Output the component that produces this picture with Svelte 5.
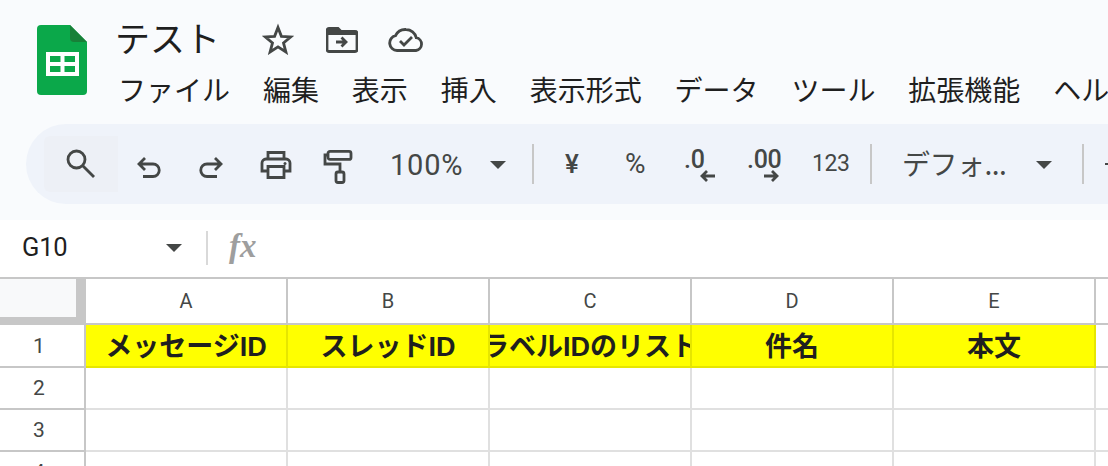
<script>
  const menus = ['ファイル','編集','表示','挿入','表示形式','データ','ツール','拡張機能','ヘルプ'];
  const cols = [
    { l: 'A', t: 'メッセージID' },
    { l: 'B', t: 'スレッドID' },
    { l: 'C', t: 'ラベルIDのリスト' },
    { l: 'D', t: '件名' },
    { l: 'E', t: '本文' }
  ];
  const rows = [2, 3, 4];
</script>

<div class="page">
  <header class="top">
    <svg class="logo" viewBox="0 0 50 70" width="50" height="70" aria-hidden="true">
      <path d="M4 0H33L50 17V66a4 4 0 0 1-4 4H4a4 4 0 0 1-4-4V4a4 4 0 0 1 4-4z" fill="#0ba84a"/>
      <path d="M33 0L50 17H37a4 4 0 0 1-4-4z" fill="#188038"/>
      <path d="M9 27H42V51H9zM13 31V37H23.500V31zM27.500 31V37H38V31zM13 41V47H23.500V41zM27.500 41V47H38V41z" fill="#fff" fill-rule="evenodd"/>
    </svg>
    <div class="head">
      <div class="titlerow">
        <span class="title">テスト</span>
        <svg class="star" viewBox="0 0 32 32" width="32" height="32"><path d="M16 4.500l3.400 8.800 9.400.6-7.300 6 2.400 9.100L16 23.900 8.100 29l2.400-9.100-7.300-6 9.400-.6z" fill="none" stroke="#444746" stroke-width="2.800" stroke-linejoin="miter"/></svg>
        <svg class="folder" viewBox="0 0 32 26" width="32" height="26"><path d="M3 1.500h9l3 3h14a2 2 0 0 1 2 2v16a2 2 0 0 1-2 2H3a2 2 0 0 1-2-2V3.500a2 2 0 0 1 2-2z" fill="none" stroke="#444746" stroke-width="2.800"/><path d="M2 2h10l3 3h15v3H2z" fill="#444746"/><path d="M10 15h9M15.500 10.500L20 15l-4.500 4.500" fill="none" stroke="#444746" stroke-width="2.800"/></svg>
        <svg class="cloud" viewBox="0 0 36 24" width="36" height="24"><path d="M9 22.500a7.500 7.500 0 0 1-1.500-14.800A11 11 0 0 1 18 1.500a10.500 10.500 0 0 1 10.300 8.200A6.500 6.500 0 0 1 28 22.500z" fill="none" stroke="#444746" stroke-width="2.800"/><path d="M12 13l4 4 8-8" fill="none" stroke="#444746" stroke-width="2.800"/></svg>
      </div>
      <nav class="menu">
        {#each menus as m}<span>{m}</span>{/each}
      </nav>
    </div>
  </header>

  <div class="toolbar">
    <div class="search">
      <svg viewBox="0 0 30 30" width="30" height="30"><circle cx="10.500" cy="10.500" r="8.500" fill="none" stroke="#444746" stroke-width="2.800"/><path d="M16.500 16.500L28 28" stroke="#444746" stroke-width="2.800"/></svg>
    </div>
    <svg class="ic undo" viewBox="0 0 26 24" width="26" height="24"><path d="M9 3L3 9l6 6M3 9h14a6 6 0 0 1 0 12.500H7" fill="none" stroke="#444746" stroke-width="2.800"/></svg>
    <svg class="ic redo" viewBox="0 0 26 24" width="26" height="24"><path d="M17 3l6 6-6 6M23 9H9a6 6 0 0 0 0 12.500h10" fill="none" stroke="#444746" stroke-width="2.800"/></svg>
    <svg class="ic print" viewBox="0 0 32 28" width="32" height="28"><path d="M8 8V1.500h16V8M8 20H2V12a4 4 0 0 1 4-4h20a4 4 0 0 1 4 4v8h-6M8 15.500h16V26.500H8z" fill="none" stroke="#444746" stroke-width="2.800"/><circle cx="25" cy="12.500" r="1.500" fill="#444746"/></svg>
    <svg class="ic roller" viewBox="0 0 30 34" width="30" height="34"><rect x="5" y="1.400" width="23" height="8" rx="2" fill="none" stroke="#444746" stroke-width="2.800"/><path d="M5 5H2v9h15v7" fill="none" stroke="#444746" stroke-width="2.800"/><rect x="13" y="22" width="8" height="10.500" rx="2" fill="none" stroke="#444746" stroke-width="2.800"/></svg>
    <span class="zoomv">100%</span>
    <span class="caret zc"></span>
    <span class="sep s1"></span>
    <span class="t yen">¥</span>
    <span class="t pct">%</span>
    <span class="dec d1">.0<svg viewBox="0 0 16 12" width="16" height="12"><path d="M15 6H2M7 1L2 6l5 5" fill="none" stroke="#444746" stroke-width="2.800"/></svg></span>
    <span class="dec d2">.00<svg viewBox="0 0 16 12" width="16" height="12"><path d="M1 6h13M9 1l5 5-5 5" fill="none" stroke="#444746" stroke-width="2.800"/></svg></span>
    <span class="t n123">123</span>
    <span class="sep s2"></span>
    <span class="fontn">デフォ...</span>
    <span class="caret fc"></span>
    <span class="sep s3"></span>
    <span class="minus"></span>
  </div>

  <div class="fbar">
    <span class="ref">G10</span>
    <span class="caret rc"></span>
    <span class="fsep"></span>
    <span class="fx">fx</span>
  </div>

  <div class="sheet">
    <div class="row hdr">
      <div class="corner"></div>
      {#each cols as c}<div class="ch">{c.l}</div>{/each}
      <div class="rest"></div>
    </div>
    <div class="row r1">
      <div class="rh">1</div>
      {#each cols as c}<div class="hc"><span>{c.t}</span></div>{/each}
      <div class="rest"></div>
    </div>
    {#each rows as r}
      <div class="row rn">
        <div class="rh">{r}</div>
        {#each cols as c}<div class="cell"></div>{/each}
        <div class="rest"></div>
      </div>
    {/each}
  </div>
</div>

<style>
  :global(body) { margin: 0; background: #fff; overflow: hidden; }
  .page { width: 1108px; height: 466px; overflow: hidden; font-family: Roboto, "Noto Sans CJK JP", sans-serif; color: #1f1f1f; }
  .top { height: 124px; background: #f9fbfd; display: flex; box-sizing: border-box; padding: 25px 0 0 37px; }
  .logo { flex: none; }
  .head { margin-left: 28px; margin-top: -14px; white-space: nowrap; }
  .titlerow { display: flex; align-items: center; height: 52px; }
  .title { font-family: "Noto Sans CJK JP", sans-serif; font-size: 35px; line-height: 52px; width: 147px; }
  .star { margin-right: 32px; margin-top: 4px; }
  .folder { margin-right: 30px; margin-top: 6px; }
  .cloud { margin-top: 6px; }
  .menu { display: flex; gap: 32.900px; font-family: "Noto Sans CJK JP", sans-serif; font-size: 28px; line-height: 40px; margin-left: 3px; color: #1f1f1f; margin-top: 6px; }
  .toolbar { height: 96px; background: #f9fbfd; position: relative; overflow: hidden; }
  .toolbar::before { content: ""; position: absolute; left: 26px; top: 0; width: 1200px; height: 80px; background: #eff3fa; border-radius: 40px; }
  .toolbar > * { position: absolute; }
  .search { left: 44px; top: 12px; width: 74px; height: 56px; background: #edf0f6; border-radius: 6px 0 0 6px; display: flex; align-items: center; }
  .search svg { margin-left: 22px; margin-top: 0; }
  .undo { left: 136px; top: 31px; }
  .redo { left: 198px; top: 31px; }
  .print { left: 260px; top: 27px; }
  .roller { left: 323px; top: 26px; }
  .zoomv { left: 390px; top: 25px; font-size: 29px; line-height: 32px; color: #444746; font-family: Roboto, sans-serif; letter-spacing: .8px; }
  .caret { width: 0; height: 0; border-left: 8px solid transparent; border-right: 8px solid transparent; border-top: 8px solid #444746; }
  .zc { left: 490px; top: 37px; }
  .fc { left: 1036px; top: 37px; }
  .sep { width: 2px; height: 40px; background: #c7c7c7; top: 20px; }
  .s1 { left: 532px; }
  .s2 { left: 870px; }
  .s3 { left: 1082px; }
  .t { color: #444746; line-height: 30px; top: 25px; }
  .yen { left: 565px; font-size: 26px; font-weight: 500; font-family: Roboto, sans-serif; }
  .pct { left: 625px; font-size: 28px; }
  .n123 { left: 812px; font-size: 23px; letter-spacing: -.4px; }
  .dec { font-size: 25px; line-height: 28px; top: 22px; color: #444746; font-weight: 500; letter-spacing: -.3px; }
  .dec svg { position: absolute; top: 24px; }
  .d1 { left: 684px; }
  .d1 svg { left: 16px; }
  .d2 { left: 747px; }
  .d2 svg { left: 16px; }
  .fontn { left: 902px; top: 19px; font-family: "Noto Sans CJK JP", sans-serif; font-size: 28px; line-height: 40px; color: #444746; letter-spacing: -.5px; white-space: nowrap; }
  .minus { left: 1105px; top: 39px; width: 3px; height: 2px; background: #444746; }
  .fbar { height: 57px; background: #fff; display: flex; align-items: center; }
  .ref { margin-left: 22px; width: 144px; font-size: 25.500px; color: #1f1f1f; margin-top: -3px; letter-spacing: -.2px; }
  .rc { width: 0; height: 0; border-left: 8px solid transparent; border-right: 8px solid transparent; border-top: 8px solid #444746; margin-top: -1px; }
  .fsep { width: 2px; height: 34px; background: #d9d9d9; margin-left: 24px; margin-top: -2px; }
  .fx { font-family: "Liberation Serif", serif; font-style: italic; font-weight: 700; font-size: 33px; color: #9e9e9e; margin-left: 21px; margin-top: -4px; }
  .sheet { border-top: 2px solid #c7c7c7; }
  .row { display: flex; }
  .corner { width: 86px; box-sizing: border-box; background: #f8f9fa; border-right: 10px solid #c7c7c7; border-bottom: 8px solid #c7c7c7; flex: none; }
  .hdr { height: 46px; }
  .ch { width: 202px; box-sizing: border-box; border-right: 2px solid #c7c7c7; border-bottom: 2px solid #c7c7c7; font-size: 20px; color: #444746; display: flex; align-items: center; justify-content: center; flex: none; padding-bottom: 1px; }
  .rest { flex: 1; border-bottom: 2px solid #c7c7c7; }
  .r1 { height: 43px; }
  .rh { width: 86px; flex: none; box-sizing: border-box; border-right: 2px solid #c7c7c7; border-bottom: 2px solid #c7c7c7; font-size: 21px; color: #444746; display: flex; align-items: center; justify-content: center; padding-right: 6px; }
  .hc { width: 202px; flex: none; box-sizing: border-box; background: #ff0; border-right: 2px solid #e6e600; border-bottom: 2px solid #e6e600; font-family: "Liberation Sans", "Noto Sans CJK JP", sans-serif; font-weight: 700; font-size: 27px; color: #1f1f1f; display: flex; justify-content: center; align-items: center; overflow: hidden; white-space: nowrap; padding-bottom: 2px; }
  .hc span { flex: none; }
  .rn { height: 42px; }
  .rn .rest { border-bottom-color: #e0e0e0; }
  .cell { width: 202px; flex: none; box-sizing: border-box; border-right: 2px solid #e0e0e0; border-bottom: 2px solid #e0e0e0; }
</style>
